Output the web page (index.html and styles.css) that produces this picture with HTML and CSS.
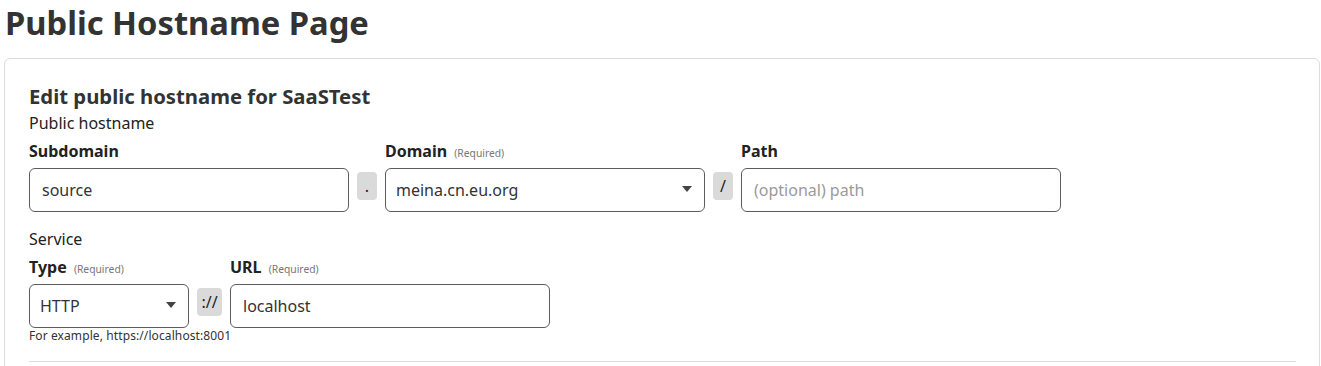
FILE: index.html
```html
<!DOCTYPE html>
<html lang="en">
<head>
<meta charset="utf-8">
<title>Public Hostname Page</title>
<link rel="stylesheet" href="styles.css">
</head>
<body>
<h1 class="page-title">Public Hostname Page</h1>
<div class="card">
  <h3 class="card-title">Edit public hostname for SaaSTest</h3>
  <div class="section-label">Public hostname</div>
  <div class="field-row first">
    <div class="field">
      <label class="field-label">Subdomain</label>
      <input class="control" type="text" value="source">
    </div>
    <span class="sep">.</span>
    <div class="field">
      <label class="field-label">Domain <span class="req">(Required)</span></label>
      <div class="select-wrap">
        <select class="control select"><option>meina.cn.eu.org</option></select>
      </div>
    </div>
    <span class="sep">/</span>
    <div class="field">
      <label class="field-label">Path</label>
      <input class="control" type="text" placeholder="(optional) path">
    </div>
  </div>

  <div class="section-label service">Service</div>
  <div class="field-row second">
    <div class="field narrow">
      <label class="field-label">Type <span class="req">(Required)</span></label>
      <div class="select-wrap">
        <select class="control select"><option>HTTP</option></select>
      </div>
    </div>
    <span class="sep wide">://</span>
    <div class="field">
      <label class="field-label">URL <span class="req">(Required)</span></label>
      <input class="control" type="text" value="localhost">
    </div>
  </div>
  <div class="hint">For example, https://localhost:8001</div>
  <hr class="divider">
</div>
</body>
</html>
```

FILE: styles.css
```css
html, body {
  margin: 0;
  padding: 0;
  background: #fff;
}
body {
  font-family: "Noto Sans", "Open Sans", sans-serif;
  color: #333;
  padding: 0 1px 0 4px;
}
.page-title {
  margin: 0;
  padding: 0 0 0 1px;
  font-size: 32.7px;
  line-height: 46px;
  font-weight: 700;
  color: #333;
}
.card {
  margin-top: 12px;
  border: 1px solid #dcdcdc;
  border-radius: 6px;
  padding: 22px 23px 24px 24px;
}
.card-title {
  margin: 0;
  font-size: 20.3px;
  line-height: 30px;
  font-weight: 700;
  color: #333;
}
.section-label {
  font-size: 16px;
  line-height: 24px;
  color: #222;
}
.section-label.service {
  margin-top: 15px;
}
.field-row {
  display: flex;
  align-items: flex-end;
  gap: 8px;
}
.field-row.first {
  margin-top: 4px;
}
.field-row.second {
  margin-top: 4px;
}
.field {
  display: flex;
  flex-direction: column;
  width: 320px;
}
.field.narrow {
  width: 160px;
}
.field-label {
  font-size: 16px;
  line-height: 24px;
  height: 24px;
  font-weight: 700;
  color: #222;
  margin-bottom: 5px;
}
.req {
  font-size: 10.3px;
  line-height: 1;
  font-weight: 400;
  color: #777;
  margin-left: 3px;
}
.control {
  display: block;
  box-sizing: border-box;
  width: 100%;
  height: 44px;
  border: 1px solid #5c5c5c;
  border-radius: 6px;
  padding: 0 12px;
  font-family: inherit;
  font-size: 16px;
  color: #333;
  background: #fff;
  outline: none;
  margin: 0;
}
.control::placeholder {
  color: #9a9a9a;
}
.select-wrap {
  position: relative;
  height: 44px;
}
.select {
  appearance: none;
  -webkit-appearance: none;
  padding: 0 10px;
}
.select-wrap::after {
  content: "";
  position: absolute;
  right: 13px;
  top: 18px;
  border-left: 5px solid transparent;
  border-right: 5px solid transparent;
  border-top: 6px solid #444;
  pointer-events: none;
}
.sep {
  box-sizing: border-box;
  width: 20px;
  height: 28px;
  margin-bottom: 12px;
  background: #dadada;
  border-radius: 4px;
  display: flex;
  align-items: center;
  justify-content: center;
  font-size: 16px;
  color: #222;
}
.sep.wide {
  width: 25px;
}
.hint {
  font-size: 12px;
  line-height: 16px;
  color: #333;
  letter-spacing: 0.1px;
}
.divider {
  margin: 17px 0 0 0;
  border: 0;
  border-top: 1px solid #dcdcdc;
}
```
